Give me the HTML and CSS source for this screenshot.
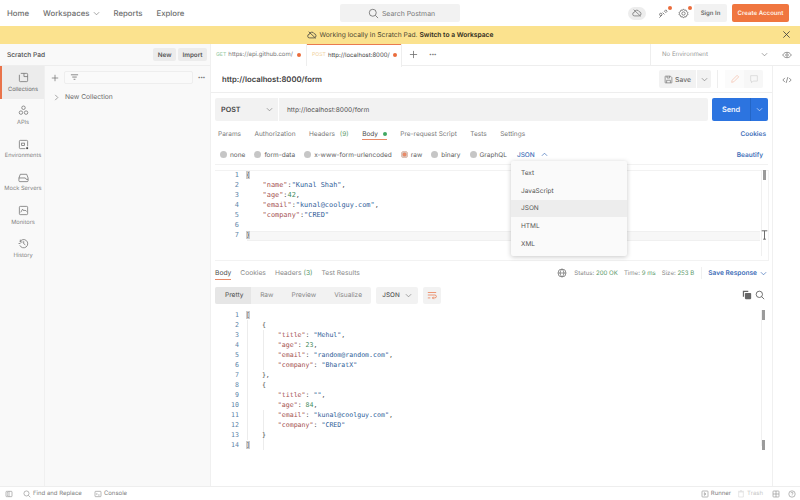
FILE: index.html
```html
<!DOCTYPE html>
<html lang="en">
<head>
<meta charset="utf-8">
<title>Postman</title>
<link rel="stylesheet" href="styles.css">
</head>
<body>
<div class="app">
  <header class="topbar">
    <nav class="topnav">
      <a>Home</a>
      <a class="has-caret">Workspaces <svg class="chev" viewBox="0 0 8 8"><path d="M1 2.500l3 3 3-3"/></svg></a>
      <a>Reports</a>
      <a>Explore</a>
    </nav>
    <div class="search"><svg class="ic" viewBox="0 0 12 12"><circle cx="5.2" cy="5.2" r="3.8"/><path d="M8 8l3 3"/></svg><span>Search Postman</span></div>
    <div class="topactions">
      <span class="cloudpill"><svg class="ic" viewBox="0 0 12 12"><path d="M3.2 9.5a2.2 2.2 0 0 1-.3-4.4A3 3 0 0 1 8.6 4.400a2.600 2.600 0 0 1 .2 5.100zM2 2l8.500 8"/></svg></span>
      <span class="badged sat"><svg class="ic" viewBox="0 0 12 12"><path d="M1.500 10.500l3-3M5 5l2 2M7 3.500l1.500-1.500 1.500 1.500L8.500 5z"/><circle cx="3" cy="7" r="1.300"/></svg><i class="badge"></i></span>
      <span class="badged gear"><svg class="ic" viewBox="0 0 12 12"><circle cx="6" cy="6" r="1.800"/><path d="M6 1l1 1.500 1.800-.3.500 1.700L11 5l-.6 1 .6 1.200-1.700.8-.5 1.800-1.800-.3L6 11l-1-1.500-1.800.3-.5-1.800L1 7.200 1.600 6 1 5l1.700-1.100.5-1.700 1.800.3z"/></svg><i class="badge"></i></span>
      <button class="signin">Sign In</button>
      <button class="create">Create Account</button>
    </div>
  </header>

  <div class="banner">
    <svg class="ic dark" viewBox="0 0 12 12"><path d="M3.200 9.500a2.200 2.200 0 0 1-.3-4.400A3 3 0 0 1 8.600 4.400a2.600 2.600 0 0 1 .2 5.100zM2 2l8.500 8"/></svg>
    <span>Working locally in Scratch Pad. <b>Switch to a Workspace</b></span>
    <svg class="ic dark close" viewBox="0 0 10 10"><path d="M1.500 1.500l7 7M8.500 1.500l-7 7"/></svg>
  </div>

  <main class="main">
    <aside class="left">
      <div class="padhead">
        <strong>Scratch Pad</strong>
        <span class="padbtns"><button>New</button><button>Import</button></span>
      </div>
      <div class="leftbody">
        <ul class="rail">
          <li class="active"><svg class="railic" viewBox="0 0 12 12"><path d="M3 1.500h6.500a1 1 0 0 1 1 1v7a1 1 0 0 1-1 1h-7a1 1 0 0 1-1-1V3M6.500 1.500v3.500h4"/></svg>Collections</li>
          <li><svg class="railic" viewBox="0 0 12 12"><circle cx="6" cy="3" r="1.900"/><circle cx="3.200" cy="8.300" r="1.900"/><circle cx="8.800" cy="8.300" r="1.900"/></svg>APIs</li>
          <li><svg class="railic" viewBox="0 0 12 12"><path d="M8 10.500H2.500a1 1 0 0 1-1-1v-7a1 1 0 0 1 1-1h7a1 1 0 0 1 1 1V8"/><rect x="4" y="4.500" width="3" height="2.500"/><path class="fill" d="M9 9h2v2H9z"/></svg>Environments</li>
          <li><svg class="railic" viewBox="0 0 12 12"><path d="M1 6.500l1.500-4h7l1.500 4v3a1 1 0 0 1-1 1H2a1 1 0 0 1-1-1zM1 6.500h7l1 1.500h2"/></svg>Mock Servers</li>
          <li><svg class="railic" viewBox="0 0 12 12"><rect x="1.500" y="1.500" width="9" height="9" rx="1"/><path d="M3 8l2-3.500 1.500 2 1-1L9.500 7"/></svg>Monitors</li>
          <li><svg class="railic" viewBox="0 0 12 12"><path d="M2.200 4A4.500 4.500 0 1 1 2 8M2.500 1.800V4.400H5M6.200 3.500V6.200L8 7.500M.6 6h2"/></svg>History</li>
        </ul>
        <div class="collections">
          <div class="coltools">
            <svg class="ic plus" viewBox="0 0 10 10"><path d="M5 1v8M1 5h8"/></svg>
            <div class="filter"><svg class="ic" viewBox="0 0 10 10"><path d="M1 2h8M2.500 4.500h5M4 7h2"/></svg></div>
            <span class="dots">•••</span>
          </div>
          <div class="colrow"><svg class="chev" viewBox="0 0 8 8"><path d="M2.500 1l3 3-3 3"/></svg>New Collection</div>
        </div>
      </div>
    </aside>

    <section class="right">
      <div class="tabbar">
        <div class="tab"><span class="get">GET</span> <span class="tabtxt">https://api.github.com/</span><i class="dot"></i></div>
        <div class="tab current"><span class="post">POST</span> <span class="tabtxt strong">http://localhost:8000/</span><i class="dot"></i></div>
        <div class="tabtools">
          <svg class="ic plus" viewBox="0 0 10 10"><path d="M5 1v8M1 5h8"/></svg>
          <span class="dots">•••</span>
        </div>
        <div class="env"><span>No Environment</span><svg class="chev" viewBox="0 0 8 8"><path d="M1 2.500l3 3 3-3"/></svg></div>
        <div class="eye"><svg class="ic" viewBox="0 0 12 12"><path d="M.8 6C2.500 3.500 4 2.800 6 2.800s3.500.7 5.200 3.200C9.500 8.500 8 9.200 6 9.200S2.500 8.500.8 6z"/><circle cx="6" cy="6" r="1.500"/></svg></div>
      </div>

      <div class="workspace">
        <div class="content">
          <div class="titlerow">
            <b>http://localhost:8000/form</b>
            <div class="saveactions">
              <button class="save"><svg class="ic" viewBox="0 0 12 12"><path d="M2 1.500h6.500L10.500 3.500V10a.5.500 0 0 1-.5.500H2a.5.500 0 0 1-.5-.5V2a.5.500 0 0 1 .5-.5zM3.500 10.500V7h5v3.500M4 1.500v2.500h3.500V1.500"/></svg>Save</button>
              <button class="savecaret"><svg class="chev" viewBox="0 0 8 8"><path d="M1 2.500l3 3 3-3"/></svg></button>
              <span class="vrule"></span>
              <span class="ghostgroup">
                <span class="ghost"><svg class="ic pen" viewBox="0 0 12 12"><path d="M2 10l.6-2.500L8.500 1.600l1.900 1.900L4.500 9.400z"/></svg></span>
                <span class="ghost"><svg class="ic faint" viewBox="0 0 12 12"><path d="M2 2h8v6.500H5L3 10.500V8.500H2z"/></svg></span>
              </span>
            </div>
          </div>

          <div class="urlrow">
            <div class="method"><b>POST</b><svg class="chev" viewBox="0 0 8 8"><path d="M1 2.500l3 3 3-3"/></svg></div>
            <div class="urlinput">http://localhost:8000/form</div>
            <div class="send"><span>Send</span><i><svg class="chev" viewBox="0 0 8 8"><path d="M1 2.500l3 3 3-3"/></svg></i></div>
          </div>

          <div class="reqtabs">
            <a>Params</a><a>Authorization</a><a>Headers <em>(9)</em></a>
            <a class="on">Body <i class="gdot"></i></a><a>Pre-request Script</a><a>Tests</a><a>Settings</a>
            <span class="link push">Cookies</span>
          </div>

          <div class="bodytypes">
            <label><i class="radio"></i>none</label>
            <label><i class="radio"></i>form-data</label>
            <label><i class="radio"></i>x-www-form-urlencoded</label>
            <label><i class="radio sel"></i>raw</label>
            <label><i class="radio"></i>binary</label>
            <label><i class="radio"></i>GraphQL</label>
            <span class="link lang">JSON <svg class="chev" viewBox="0 0 8 8"><path d="M1 5.500l3-3 3 3"/></svg></span>
            <span class="link push beautify">Beautify</span>
          </div>

          <div class="editor">
            <div class="gutter"><div>1</div><div>2</div><div>3</div><div>4</div><div>5</div><div>6</div><div>7</div></div>
            <div class="code">
              <div><span class="brk">{</span></div>
              <div>    <span class="k">"name"</span>:<span class="s">"Kunal Shah"</span>,</div>
              <div>    <span class="k">"age"</span>:<span class="n">42</span>,</div>
              <div>    <span class="k">"email"</span>:<span class="s">"kunal@coolguy.com"</span>,</div>
              <div>    <span class="k">"company"</span>:<span class="s">"CRED"</span></div>
              <div> </div>
              <div><span class="brk">}</span></div>
            </div>
            <i class="activeline"></i>
            <i class="track"></i>
            <i class="scroll req"></i>
            <svg class="ibeam" viewBox="0 0 10 14"><path d="M1 1h8M5 1v12M3 13h4"/></svg>
          </div>

          <ul class="menu">
            <li>Text</li><li>JavaScript</li><li class="sel">JSON</li><li>HTML</li><li>XML</li>
          </ul>

          <div class="restabs">
            <a class="on">Body</a><a>Cookies</a><a>Headers <em>(3)</em></a><a>Test Results</a>
            <div class="status">
              <svg class="ic" viewBox="0 0 12 12"><circle cx="6" cy="6" r="4.800"/><path d="M1.200 6h9.600M6 1.200c-3 3-3 6.600 0 9.600M6 1.200c3 3 3 6.600 0 9.600"/></svg>
              <span>Status: <em>200 OK</em></span><span>Time: <em>9 ms</em></span><span>Size: <em>253 B</em></span>
              <span class="link saveresp">Save Response <svg class="chev" viewBox="0 0 8 8"><path d="M1 2.500l3 3 3-3"/></svg></span>
            </div>
          </div>

          <div class="restools">
            <div class="views"><span class="on">Pretty</span><span>Raw</span><span>Preview</span><span>Visualize</span></div>
            <div class="fmt">JSON <svg class="chev" viewBox="0 0 8 8"><path d="M1 2.500l3 3 3-3"/></svg></div>
            <div class="wrap"><svg class="ic orange" viewBox="0 0 12 12"><path d="M1 3h10M1 6h8.500a1.700 1.700 0 0 1 0 3.500H6.500M8 8l-1.500 1.500L8 11M1 9.500h3"/></svg></div>
            <div class="copyfind">
              <svg class="ic solid" viewBox="0 0 12 12"><path d="M1 1h6.500v1.500H2.500V8H1z"/><rect x="3.500" y="3.500" width="7.500" height="7.500" rx="1"/></svg>
              <svg class="ic darker" viewBox="0 0 12 12"><circle cx="5.200" cy="5.200" r="3.800"/><path d="M8 8l3 3"/></svg>
            </div>
          </div>

          <div class="response">
            <div class="gutter"><div>1</div><div>2</div><div>3</div><div>4</div><div>5</div><div>6</div><div>7</div><div>8</div><div>9</div><div>10</div><div>11</div><div>12</div><div>13</div><div>14</div></div>
            <div class="code">
              <div><span class="brk">[</span></div>
              <div>    {</div>
              <div>        <span class="k">"title"</span>: <span class="s">"Mehul"</span>,</div>
              <div>        <span class="k">"age"</span>: <span class="n">23</span>,</div>
              <div>        <span class="k">"email"</span>: <span class="s">"random@random.com"</span>,</div>
              <div>        <span class="k">"company"</span>: <span class="s">"BharatX"</span></div>
              <div>    },</div>
              <div>    {</div>
              <div>        <span class="k">"title"</span>: <span class="s">""</span>,</div>
              <div>        <span class="k">"age"</span>: <span class="n">84</span>,</div>
              <div>        <span class="k">"email"</span>: <span class="s">"kunal@coolguy.com"</span>,</div>
              <div>        <span class="k">"company"</span>: <span class="s">"CRED"</span></div>
              <div>    }</div>
              <div><span class="brk">]</span></div>
            </div>
            <i class="guide g1"></i><i class="guide g2"></i><i class="guide g3"></i>
            <i class="track"></i>
            <i class="scroll r1"></i><i class="scroll r2"></i>
          </div>
        </div>
        <div class="coderail"><svg class="ic" viewBox="0 0 12 12"><path d="M3.500 3.500L1 6l2.500 2.500M8.500 3.500L11 6 8.500 8.500M7 2.500L5 9.500"/></svg></div>
      </div>
    </section>
  </main>

  <footer class="footer">
    <svg class="ic" viewBox="0 0 12 12"><rect x="1.500" y="2" width="9" height="8" rx="1"/><path d="M6 2v8M3 4h1.500M3 6h1.500M3 8h1.500"/></svg>
    <span class="fitem find"><svg class="ic" viewBox="0 0 12 12"><circle cx="5.2" cy="5.2" r="3.8"/><path d="M8 8l3 3"/></svg>Find and Replace</span>
    <span class="fitem console"><svg class="ic" viewBox="0 0 12 12"><rect x="1.500" y="2" width="9" height="8" rx="1"/><path d="M3.500 5l1.500 1-1.500 1M6 7.500h2.500"/></svg>Console</span>
    <span class="fitem runner"><svg class="ic" viewBox="0 0 12 12"><rect x="1.500" y="1.500" width="9" height="9" rx="1"/><path d="M5 4l2.500 2L5 8z"/></svg>Runner</span>
    <span class="fitem trash"><svg class="ic faint" viewBox="0 0 12 12"><path d="M2.500 3h7v7.500h-7zM1.500 2h9M4.500 1h3"/></svg>Trash</span>
    <svg class="ic" viewBox="0 0 12 12"><rect x="1.500" y="1.500" width="9" height="9" rx="1"/><path d="M1.500 6h9M6 1.500v9"/></svg>
    <svg class="ic" viewBox="0 0 12 12"><circle cx="6" cy="6" r="4.800"/><path d="M4.500 4.800a1.500 1.500 0 1 1 2 1.400c-.4.200-.5.500-.5.900M6 8.300v.5"/></svg>
  </footer>
</div>
</body>
</html>
```
FILE: styles.css
```css
* { box-sizing: border-box; }
html, body { margin: 0; height: 100%; }
body { font-family: Inter, "Liberation Sans", sans-serif; font-size: 7px; color: #6b6b6b; background: #fff; overflow: hidden; text-rendering: geometricPrecision; }
ul { list-style: none; margin: 0; padding: 0; }
button { font-family: inherit; border: 0; text-rendering: geometricPrecision; }
em { font-style: normal; color: #5c9a6b; }
i { font-style: normal; display: block; }

.app { width: 800px; height: 500px; display: flex; flex-direction: column; }

.ic { width: 10px; height: 10px; fill: none; stroke: #6f6f6f; stroke-width: .9; flex: none; }
.ic.dark { stroke: #3a3a3a; }
.ic.faint { stroke: #d6d6d6; }
.ic.pen { stroke: #f4c3ae; }
.ic.orange { stroke: #e9774b; }
.ic.darker { stroke: #444; }
.ic.solid { fill: #666; stroke: none; }
.chev { width: 7px; height: 7px; fill: none; stroke: #808080; stroke-width: .8; flex: none; }
.railic { width: 11px; height: 11px; fill: none; stroke: #6b6b6b; stroke-width: .8; display: block; margin: 0 auto 2.500px; }
.railic .fill { fill: #444; stroke: none; }

.topbar { height: 26px; flex: none; display: grid; grid-template-columns: 1fr 120px 1fr; align-items: center; padding: 0 7px; }
.topnav { display: flex; align-items: center; gap: 14px; font-size: 7.800px; font-weight: 500; color: #6e6e6e; }
.has-caret { display: flex; align-items: center; gap: 4px; margin-right: -1px; }
.search { height: 18px; background: #f2f2f2; border-radius: 2px; display: flex; align-items: center; justify-content: center; gap: 3px; padding-left: 3px; font-size: 6.900px; color: #777; }
.search .ic { width: 11px; height: 11px; }
.topactions { display: flex; align-items: center; justify-content: flex-end; margin-right: 4px; }
.cloudpill { width: 18px; height: 13px; border-radius: 7px; background: #ededed; display: flex; align-items: center; justify-content: center; margin-right: 12px; }
.badged { position: relative; display: flex; margin-right: 9px; }
.badged.gear { margin-right: 5.500px; }
.badged .ic { width: 11px; height: 11px; }
.badge { position: absolute; top: -2px; right: -3px; width: 4px; height: 4px; border-radius: 50%; background: #ea6c3c; }
.signin { width: 33px; height: 18px; background: #f2f2f2; border-radius: 2px; font-size: 6px; font-weight: 600; color: #6b6b6b; padding: 0; margin-right: 5px; }
.create { width: 57px; height: 18px; background: #f0763f; border-radius: 2px; font-size: 6.100px; font-weight: 600; color: #fff3ea; padding: 0; }

.banner { height: 18px; flex: none; background: #fbe28e; display: flex; align-items: center; justify-content: center; gap: 3px; color: #4a4430; font-size: 6.700px; position: relative; }
.banner b { font-weight: 600; color: #2e2a1c; }
.banner .close { position: absolute; right: 9px; top: 4px; width: 9px; height: 9px; }

.main { flex: 1; min-height: 0; display: grid; grid-template-columns: 211px 1fr; }

.left { background: #f9f9f9; display: flex; flex-direction: column; border-right: 1px solid #f0f0f0; min-height: 0; }
.padhead { height: 22px; flex: none; display: flex; align-items: center; justify-content: space-between; padding: 0 3px 0 7px; border-bottom: 1px solid #eee; }
.padhead strong { font-weight: 500; font-size: 6.600px; color: #4b4b4b; }
.padbtns { display: flex; gap: 2px; }
.padbtns button { height: 13px; background: #ececec; border-radius: 2px; font-size: 6.300px; font-weight: 600; color: #555; padding: 0 4.500px; }
.leftbody { flex: 1; display: flex; min-height: 0; }
.rail { width: 45px; flex: none; border-right: 1px solid #f0f0f0; }
.rail li { height: 33.300px; padding-top: 6px; text-align: center; font-size: 5.700px; color: #838383; border-left: 2px solid transparent; }
.rail li.active { background: #ececec; border-left-color: #e9734a; color: #666; }
.collections { flex: 1; }
.coltools { display: flex; align-items: center; padding: 5px 5px 0 6px; gap: 5px; }
.coltools .plus { width: 8px; height: 8px; }
.filter { flex: 1; height: 13px; border: 1px solid #eee; border-radius: 2px; background: #fafafa; padding: 1px 5px; display: flex; align-items: center; }
.filter .ic { width: 9px; height: 9px; }
.dots { font-size: 5px; letter-spacing: -.4px; color: #777; }
.colrow { display: flex; align-items: center; gap: 5px; padding: 9px 0 0 8px; font-size: 6.700px; color: #6b6b6b; }

.right { display: flex; flex-direction: column; min-width: 0; min-height: 0; }
.tabbar { height: 22px; flex: none; display: flex; align-items: center; border-bottom: 1px solid #eee; }
.tab { height: 22px; display: flex; align-items: center; gap: 2px; padding: 0 4px 0 5px; white-space: nowrap; border-right: 1px solid #eee; position: relative; background: #fff; flex: none; }
.tab:first-child { width: 96px; }
.tab.current { width: 95px; margin-bottom: -1px; height: 23px; }
.tab.current::before { content: ""; position: absolute; left: 0; right: 0; top: 0; height: 1px; background: #e97a4e; }
.tabtxt { width: 67px; color: #777; font-size: 6px; }
.tabtxt.strong { color: #444; width: 63px; }
.get { color: #8fc79d; font-size: 5.200px; }
.post { color: #f0cf9a; font-size: 5.200px; }
.dot { width: 4px; height: 4px; border-radius: 50%; background: #ea6c3c; margin-left: 0; }
.tabtools { display: flex; align-items: center; gap: 11px; padding-left: 7px; flex: 1; }
.tabtools .plus { width: 9px; height: 9px; }
.env { width: 124px; height: 21px; display: flex; align-items: center; justify-content: space-between; border-left: 1px solid #eee; padding: 0 6px 0 11px; color: #999; font-size: 6.100px; }
.eye { width: 26px; display: flex; justify-content: center; }

.workspace { flex: 1; display: flex; min-height: 0; }
.content { flex: 1; min-width: 0; position: relative; padding: 0 4px; border-right: 1px solid #f0f0f0; }
.coderail { width: 27px; flex: none; display: flex; justify-content: center; padding-top: 9px; }

.titlerow { height: 27px; margin: 0 -4px; padding: 0 9px 0 11px; display: flex; align-items: center; justify-content: space-between; border-bottom: 1px solid #eee; }
.titlerow b { font-weight: 600; font-size: 7.700px; color: #3f3f3f; margin-top: 1px; }
.saveactions { display: flex; align-items: center; }
.save { height: 18px; width: 37px; background: #f2f2f2; border-radius: 2px 0 0 2px; display: flex; align-items: center; justify-content: center; gap: 2px; font-size: 6.800px; font-weight: 500; color: #6b6b6b; padding: 0; }
.save .ic { width: 9px; height: 9px; }
.savecaret { height: 18px; width: 14px; margin-left: 1px; background: #f2f2f2; border-radius: 0 2px 2px 0; display: flex; align-items: center; justify-content: center; padding: 0; }
.vrule { width: 1px; height: 18px; background: #eee; margin: 0 7px 0 6px; }
.ghostgroup { display: flex; width: 38px; height: 18px; background: #f7f7f7; border-radius: 2px; }
.ghost { flex: 1; display: flex; align-items: center; justify-content: center; }
.ghost:first-child { background: #fbfbfb; }

.urlrow { display: flex; height: 23px; margin-top: 5px; }
.method { width: 64px; background: #f2f2f2; border-radius: 2px 0 0 2px; display: flex; align-items: center; justify-content: space-between; padding: 0 5px 0 6px; border-right: 1px solid #fff; }
.method b { font-weight: 600; font-size: 7.200px; color: #444; }
.urlinput { width: 430px; background: #f2f2f2; border-radius: 0 2px 2px 0; padding-left: 8px; display: flex; align-items: center; color: #555; font-size: 6.600px; }
.send { width: 56px; margin-left: 4px; background: #2c74e0; border-radius: 2px; display: flex; color: #f0f5ff; font-size: 7.400px; font-weight: 600; align-items: center; }
.send span { flex: 1; text-align: center; }
.send i { width: 18px; height: 100%; display: flex; align-items: center; justify-content: center; border-left: 1px solid #2466c6; }
.send .chev { stroke: #dbe7fb; }

.reqtabs { height: 22px; margin-top: 2px; display: flex; align-items: center; gap: 13.500px; padding: 0 2px 0 3px; font-size: 6.500px; color: #7a7a7a; }
.reqtabs a { display: flex; align-items: center; gap: 3px; height: 100%; position: relative; white-space: pre; }
.on { color: #4b4b4b !important; }
.reqtabs a.on::after, .restabs a.on::after { content: ""; position: absolute; left: 0; right: 0; height: 1px; background: #e98a68; bottom: 5px; }
.gdot { width: 4px; height: 4px; border-radius: 50%; background: #3fa862; }
.link { color: #3f6fb8; font-weight: 600; font-size: 6.500px; }
.push { margin-left: auto; }

.bodytypes { height: 20px; display: flex; align-items: center; padding-left: 5px; gap: 9px; font-size: 6.500px; color: #606060; border-bottom: 1px solid #f2f2f2; padding-right: 5px; margin-bottom: 5px; }
.bodytypes label { display: flex; align-items: center; gap: 3px; }
.radio { width: 7px; height: 7px; border-radius: 50%; background: #c6c6c6; }
.radio.sel { background: #e98a68; box-shadow: inset 0 0 0 1.500px #d8c8c0; }
.lang { display: flex; align-items: center; gap: 6px; margin-left: 1px; font-weight: 500; }
.lang .chev { stroke: #3f6fb8; }

.gutter, .code { font-family: "DejaVu Sans Mono", "Liberation Mono", monospace; line-height: 10px; }
.code div { white-space: pre; min-height: 10px; }
.editor .gutter, .editor .code { font-size: 6.900px; }
.response .gutter, .response .code { font-size: 6.600px; }
.editor { height: 91px; display: flex; position: relative; border: 1px solid #f2f2f2; border-width: 0 1px 1px 0; box-shadow: inset 0 1px #f2f2f2; width: 554px; }
.gutter { width: 24px; text-align: right; color: #5e85a8; flex: none; }
.code { padding-left: 7px; color: #555; position: relative; z-index: 1; }
.k { color: #a4514f; }
.s { color: #2f5e99; }
.n { color: #3f8a5c; }
.brk { background: #e6e6e6; outline: 1px solid #ccc; outline-offset: -1px; }
.activeline { position: absolute; left: 32px; right: 8px; top: 61px; height: 10px; background: #f7f7f7; border-top: 1px solid #f0f0f0; border-bottom: 1px solid #f0f0f0; }
.track { position: absolute; left: 546px; top: 0; bottom: 4px; width: 1px; background: #f0f0f0; }
.scroll { position: absolute; width: 3px; background: #9b9b9b; }
.scroll.req { right: 2px; top: 0; height: 10px; }
.ibeam { position: absolute; right: 0; top: 59px; width: 7px; height: 12px; fill: none; stroke: #555; stroke-width: 1.200; }

.menu { position: absolute; left: 300px; top: 95px; width: 116px; padding: 3px 0; background: #fafafa; border-radius: 2px; box-shadow: 0 1px 5px rgba(0,0,0,.22); font-size: 6.500px; color: #555; z-index: 5; }
.menu li { height: 17.800px; padding-left: 10px; display: flex; align-items: center; }
.menu li.sel { background: #ededed; }

.restabs { height: 24px; display: flex; align-items: center; gap: 9px; font-size: 6.700px; color: #888; padding-right: 1px; }
.restabs a { position: relative; height: 100%; display: flex; align-items: center; white-space: pre; }
.status { margin-left: auto; display: flex; align-items: center; gap: 6px; font-size: 6.100px; color: #8a8a8a; }
.status > .ic { margin-right: 1px; }
.saveresp { display: flex; align-items: center; gap: 3px; margin-left: 1px; padding-left: 6px; border-left: 1px solid #f0f0f0; height: 12px; font-size: 6.600px; }
.saveresp .chev { stroke: #3f6fb8; }

.restools { height: 18px; margin-top: 1px; display: flex; align-items: center; gap: 5px; }
.views { display: flex; width: 156px; height: 17px; background: #f2f2f2; border-radius: 2px; font-size: 6.600px; color: #888; align-items: center; }
.views span { padding: 0 9px; height: 100%; display: flex; align-items: center; }
.views span.on { background: #e6e6e6; border-radius: 2px 0 0 2px; width: 37px; padding: 0 0 0 10px; }
.fmt { width: 42px; height: 17px; background: #f2f2f2; border-radius: 2px; display: flex; align-items: center; justify-content: center; gap: 5px; font-size: 6.300px; font-weight: 500; color: #555; }
.wrap { width: 18px; height: 17px; background: #f2f2f2; border-radius: 2px; display: flex; align-items: center; justify-content: center; }
.copyfind { margin-left: auto; display: flex; gap: 3px; margin-right: 3px; }

.response { flex: 1; display: flex; position: relative; margin-top: 6px; }
.guide { position: absolute; width: 1px; background: #ececec; }
.guide.g1 { left: 32px; top: 10px; height: 120px; }
.guide.g2 { left: 48px; top: 20px; height: 40px; }
.guide.g3 { left: 48px; top: 100px; height: 40px; }
.scroll.r1 { right: 3px; top: 0; height: 10px; }
.scroll.r2 { right: 3px; top: 130px; height: 10px; }

.footer { height: 14px; flex: none; display: flex; align-items: center; gap: 8px; padding: 0 4px 0 5px; border-top: 1px solid #eee; background: #fff; font-size: 6px; color: #808080; }
.footer .ic { width: 8px; height: 8px; stroke: #8a8a8a; }
.fitem { display: flex; align-items: center; gap: 2px; }
.find { margin-left: 2px; }
.console { margin-left: 4px; }
.runner { margin-left: auto; }
.trash { color: #c8c8c8; margin: 0 1px 0 -2px; }
.footer .trash .ic { stroke: #d6d6d6; }
```
